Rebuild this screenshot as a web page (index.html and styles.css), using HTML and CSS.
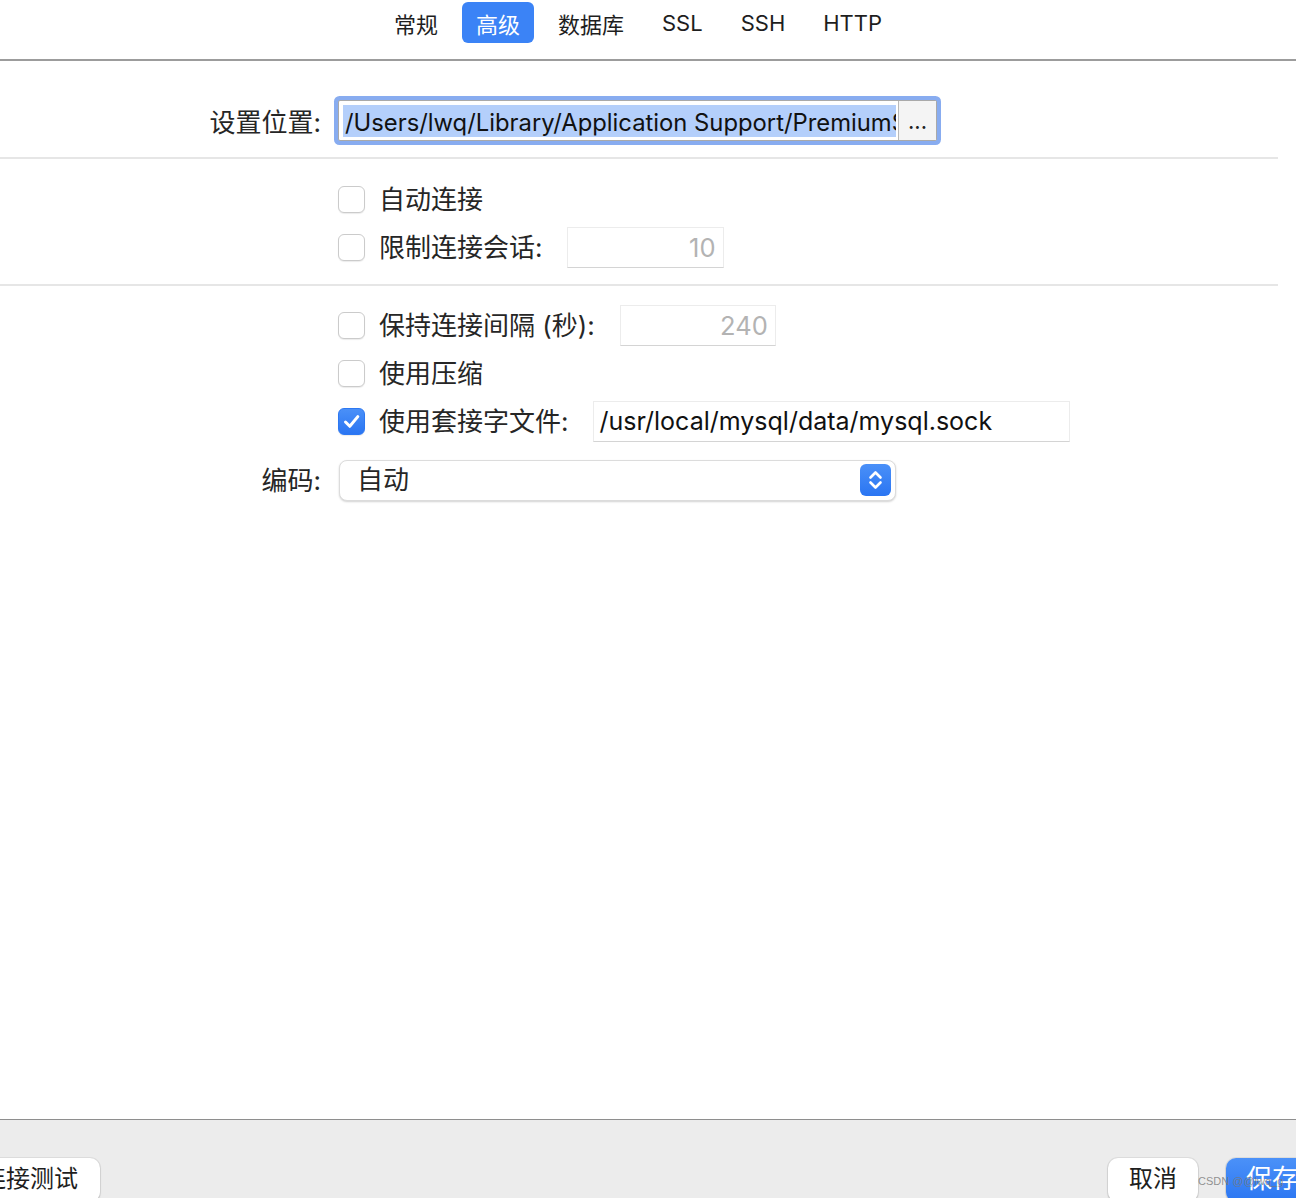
FILE: index.html
```html
<!DOCTYPE html>
<html lang="zh-CN">
<head>
<meta charset="utf-8">
<title>高级</title>
<link rel="stylesheet" href="styles.css">
</head>
<body>
<div class="window">
  <nav class="tabs">
    <span class="tab">常规</span>
    <span class="tab active">高级</span>
    <span class="tab">数据库</span>
    <span class="tab">SSL</span>
    <span class="tab">SSH</span>
    <span class="tab">HTTP</span>
  </nav>

  <main class="content">
    <section class="group g1">
      <div class="row">
        <div class="lbl">设置位置:</div>
        <div class="ctl">
          <div class="path-field">
            <div class="path-sel">/Users/lwq/Library/Application Support/PremiumSoft CyberTech/Navicat CC/Common/Settings</div>
            <div class="browse">...</div>
          </div>
        </div>
      </div>
    </section>
    <div class="sep"></div>
    <section class="group g2">
      <div class="row">
        <div class="lbl"></div>
        <div class="ctl"><span class="cb"></span><span class="txt">自动连接</span></div>
      </div>
      <div class="row">
        <div class="lbl"></div>
        <div class="ctl"><span class="cb"></span><span class="txt">限制连接会话:</span><span class="field num f-sess">10</span></div>
      </div>
    </section>
    <div class="sep"></div>
    <section class="group g3">
      <div class="row">
        <div class="lbl"></div>
        <div class="ctl"><span class="cb"></span><span class="txt">保持连接间隔 (秒):</span><span class="field num f-keep">240</span></div>
      </div>
      <div class="row">
        <div class="lbl"></div>
        <div class="ctl"><span class="cb"></span><span class="txt">使用压缩</span></div>
      </div>
      <div class="row">
        <div class="lbl"></div>
        <div class="ctl"><span class="cb checked"><svg viewBox="0 0 27 27" width="27" height="27"><path d="M7.5 14 L11.8 18.3 L19.8 8.6" fill="none" stroke="#fff" stroke-width="3" stroke-linecap="round" stroke-linejoin="round"/></svg></span><span class="txt">使用套接字文件:</span><span class="field f-sock">/usr/local/mysql/data/mysql.sock</span></div>
      </div>
      <div class="row enc">
        <div class="lbl">编码:</div>
        <div class="ctl">
          <div class="select">
            <span class="sel-val">自动</span>
            <span class="stepper"><svg viewBox="0 0 31 32" width="31" height="32"><path d="M10.5 13.5 L15.5 8.5 L20.5 13.5 M10.5 18.5 L15.5 23.5 L20.5 18.5" fill="none" stroke="#fff" stroke-width="2.6" stroke-linecap="round" stroke-linejoin="round"/></svg></span>
          </div>
        </div>
      </div>
    </section>
  </main>

  <footer class="footer">
    <span class="btn btn-test">连接测试</span>
    <div class="actions">
      <span class="btn">取消</span>
      <span class="btn primary">保存</span>
    </div>
  </footer>
  <span class="watermark">CSDN @@lwq_g</span>
</div>
</body>
</html>
```

FILE: styles.css
```css
* { box-sizing: border-box; }

html, body {
  margin: 0;
  padding: 0;
  background: #ffffff;
}

body {
  width: 1296px;
  height: 1198px;
  overflow: hidden;
  font-family: "Inter", "Noto Sans CJK SC", sans-serif;
  color: #262626;
}

.window {
  position: relative;
  display: flex;
  flex-direction: column;
  height: 1198px;
}

/* ---------- tabs ---------- */
.tabs {
  height: 61px;
  display: flex;
  justify-content: center;
  align-items: flex-start;
  gap: 10px;
  padding: 2px 20px 0 0;
  border-bottom: 2px solid #9c9c9c;
  flex: none;
}

.tab {
  height: 41px;
  padding: 0 14px;
  display: flex;
  align-items: center;
  font-size: 22px;
  color: #1e1e1e;
  border-radius: 6px;
}

.tab.active {
  background: #3b83f6;
  color: #ffffff;
}

/* ---------- content ---------- */
.content {
  flex: 1;
  display: flex;
  flex-direction: column;
}

.group { display: flex; flex-direction: column; }
.g1 { padding: 35px 0 12px; }
.g2 { padding: 16px 0 13px; }
.g3 { padding: 15px 0 0; }

.sep {
  height: 2px;
  background: #e6e6e6;
  margin-right: 18px;
  flex: none;
}

.row {
  display: grid;
  grid-template-columns: 321px 1fr;
  column-gap: 17px;
  height: 48px;
  align-items: center;
}

.g1 .row { height: 49px; }

.row.enc { margin-top: 11px; }

.lbl {
  text-align: right;
  font-size: 26px;
  color: #262626;
}

.enc .lbl { margin-top: -4px; }

.ctl {
  display: flex;
  align-items: center;
  font-size: 26px;
}

/* path field */
.path-field {
  display: flex;
  width: 599px;
  height: 41px;
  border: 1px solid #a9a9a9;
  border-radius: 2px;
  box-shadow: 0 0 0 4px #88acf0;
  background: #ffffff;
}

.path-sel {
  flex: 1;
  margin: 4px 2px 3px 4px;
  background: #b4cffb;
  white-space: nowrap;
  overflow: hidden;
  font-size: 23.8px;
  line-height: 31px;
  padding: 2px 0 0 2px;
  color: #111;
}

.browse {
  width: 38px;
  background: #f4f4f4;
  border-left: 1px solid #b9b9b9;
  font-size: 22px;
  line-height: 40px;
  text-align: center;
  color: #222;
}

/* checkbox */
.cb {
  width: 27px;
  height: 27px;
  border: 1px solid #cbcbcb;
  border-radius: 6px;
  background: #ffffff;
  box-shadow: 0 1px 1px rgba(0, 0, 0, 0.08);
  flex: none;
  display: flex;
}

.cb.checked {
  border-color: #2d78f2;
  background: linear-gradient(#4a90f8, #2a75f2);
}

.cb svg { margin: -1px; }

.txt {
  margin-left: 14px;
  margin-top: -4px;
  white-space: nowrap;
}

/* text fields */
.field {
  height: 41px;
  border: 1px solid #ececec;
  border-bottom-color: #d4d4d4;
  background: #ffffff;
  font-size: 25px;
  display: flex;
  align-items: center;
  white-space: nowrap;
}

.field.num {
  justify-content: flex-end;
  padding-right: 7px;
  font-size: 25.5px;
  color: #b3b3b3;
}

.f-sess { width: 157px; margin-left: 24px; }
.f-keep { width: 156px; margin-left: 25px; }
.f-sock {
  width: 477px;
  margin-left: 24px;
  padding-left: 6px;
  color: #111;
}

/* select */
.select {
  width: 557px;
  height: 41px;
  margin-left: 1px;
  border: 1px solid #dcdcdc;
  border-radius: 8px;
  box-shadow: 0 1px 2px rgba(0, 0, 0, 0.18);
  display: flex;
  align-items: center;
  justify-content: space-between;
  padding: 0 4px 0 17px;
  background: #ffffff;
}

.sel-val { font-size: 26px; color: #262626; margin-top: -5px; }

.stepper {
  width: 31px;
  height: 32px;
  border-radius: 6px;
  background: linear-gradient(#4a90f8, #2a75f2);
  display: flex;
}

/* ---------- footer ---------- */
.footer {
  height: 79px;
  flex: none;
  border-top: 1px solid #8e8e8e;
  background: #ececec;
  display: flex;
  justify-content: space-between;
  align-items: flex-start;
  padding-top: 38px;
}

.btn {
  height: 44px;
  padding: 0 21px 8px;
  border-radius: 10px;
  background: #ffffff;
  box-shadow: 0 0 0 1px rgba(0, 0, 0, 0.06), 0 1px 2px rgba(0, 0, 0, 0.2);
  font-size: 24px;
  color: #1e1e1e;
  display: flex;
  align-items: center;
}

.btn-test { margin-left: -40px; padding: 0 22px 8px; }

.actions {
  display: flex;
  gap: 28px;
  margin-right: -22px;
}

.btn.primary {
  background: linear-gradient(#4b91f8, #2b76f2);
  color: #ffffff;
  font-size: 26px;
  padding: 0 20px 8px;
}

.watermark {
  position: absolute;
  left: 1198px;
  top: 1175px;
  font-family: "Liberation Sans", sans-serif;
  font-size: 11px;
  color: rgba(120, 120, 120, 0.8);
}
```
